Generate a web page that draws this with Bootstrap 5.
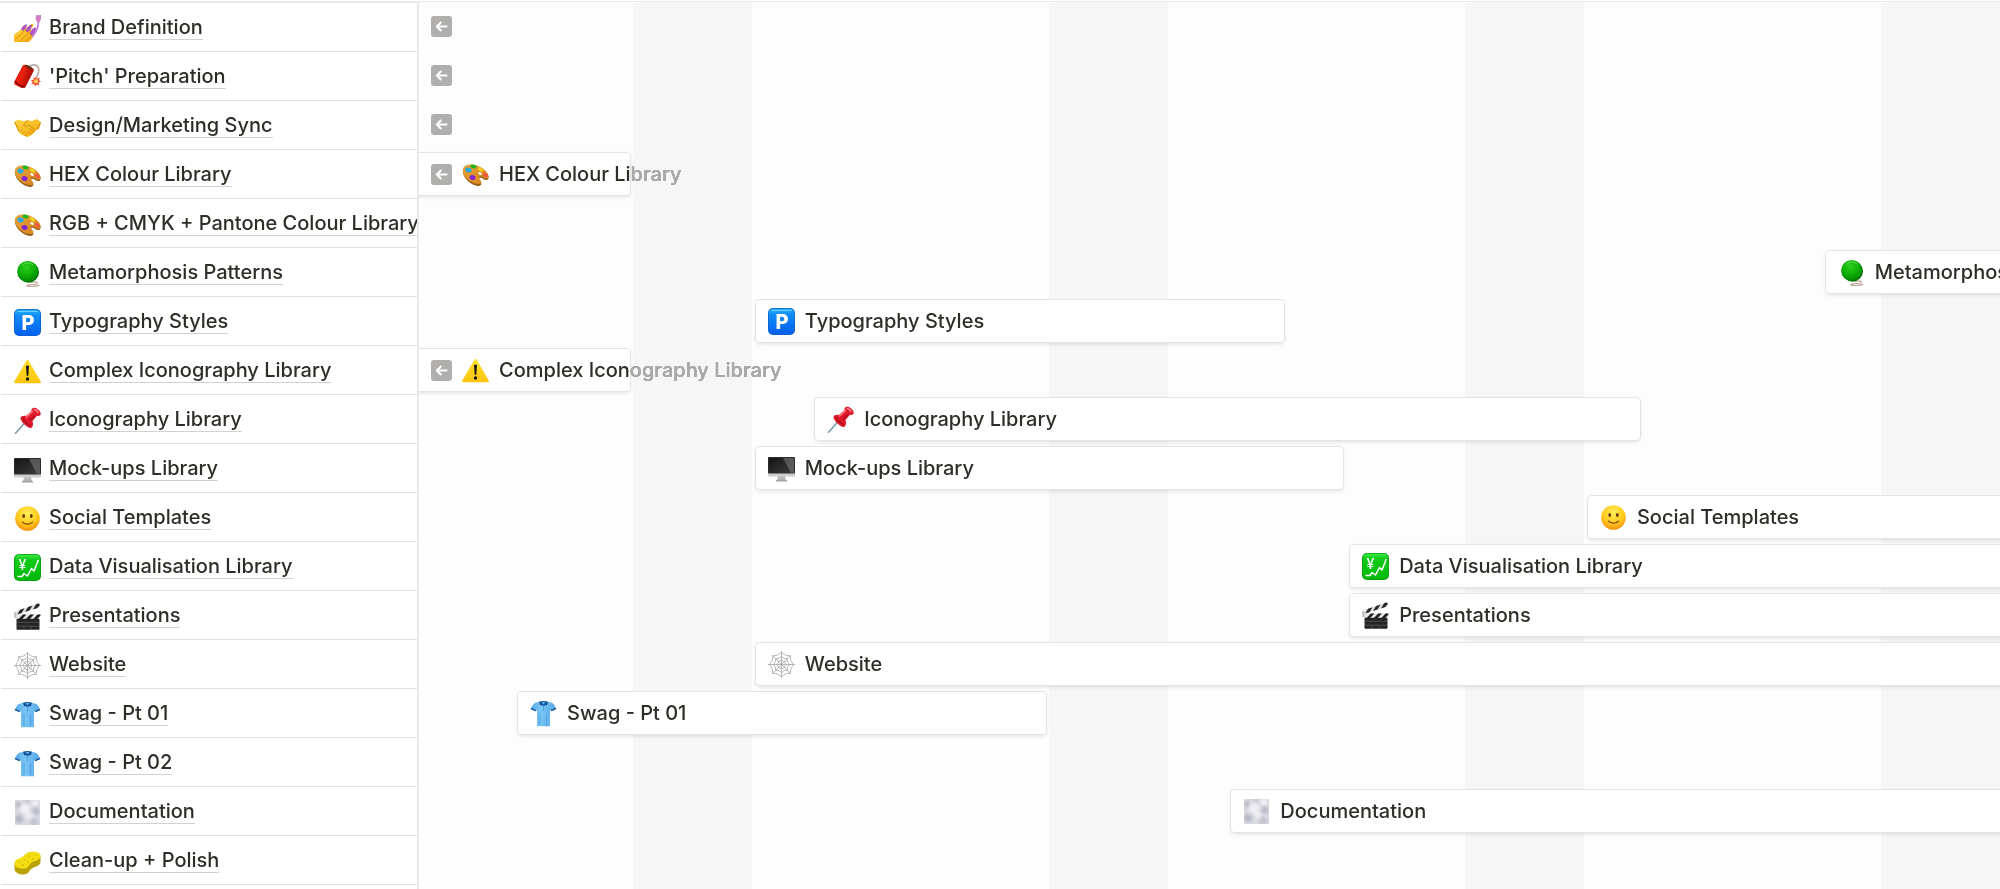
<!DOCTYPE html>
<html lang="en">
<head>
<meta charset="utf-8">
<meta name="viewport" content="width=device-width, initial-scale=1">
<title>Brand timeline</title>
<link href="https://cdn.jsdelivr.net/npm/bootstrap@5.3.0/dist/css/bootstrap.min.css" rel="stylesheet">
<style>
  :root { --row-h: 49px; --line: #e9e9e8; --ink: #2f2d27; --faded: #a9a9a7; }
  body { font-family: Inter, "Liberation Sans", sans-serif; font-size: 20px; line-height: 24px; font-weight: 500; font-optical-sizing: none; color: var(--ink); background: #fff; }
  .board { min-height: 100vh; padding-top: 1px; }
  .names { width: 419px; border-right: 2px solid var(--line); border-top: 2px solid var(--line); padding-left: 1px; }
  .name-row { height: var(--row-h); border-bottom: 1px solid #e2e2e1; padding: 2px 0 0 13px; gap: 8px; }
  .name-row a { color: inherit; text-decoration: none; white-space: nowrap; border-bottom: 1px solid #d2d2d0; line-height: 23px; }
  .emo { width: 27px; height: 27px; flex: none; overflow: visible; }
  .chart { display: grid; grid-template-columns: minmax(0, .6fr) repeat(26, minmax(0, 1fr)); grid-template-rows: repeat(18, var(--row-h)) 1fr; background: #fdfdfd; border-top: 1px solid var(--line); min-width: 0; }
  .weekend { grid-row: 1 / -1; grid-column: var(--from) / span 2; background: #f6f6f6; }
  .bar { position: relative; grid-row: var(--row); grid-column: var(--from) / var(--to); margin: 4px 3px 3px 4px; padding-left: 12px; gap: 10px; background: #fff; border-radius: 4px; box-shadow: 0 0 0 1px #e4e4e3, 0 2px 4px rgba(15, 15, 15, .12); white-space: nowrap; }
  .bar.to-edge { margin-right: -8px; }
  .bar.from-edge { margin-left: -8px; padding-left: 20px; }
  /* greys out the part of a label that runs past its bar */
  .bar.from-edge::after { content: ""; position: absolute; left: 100%; top: 4px; bottom: 4px; width: 200px; background: var(--faded); mix-blend-mode: lighten; }
  .back { width: 21px; height: 21px; flex: none; border: 0; padding: 0; border-radius: 3px; background: #b0afad; display: block; }
  .back svg { display: block; }
  .loose { grid-row: var(--row); grid-column: 1 / 3; margin-left: 12px; align-self: center; }
</style>
</head>
<body>
<svg width="0" height="0" class="position-absolute" aria-hidden="true">
  <defs>
    <linearGradient id="gSkin" x1="0" y1="0" x2="1" y2="1"><stop offset="0" stop-color="#ffd84a"/><stop offset="1" stop-color="#f3a806"/></linearGradient>
    <linearGradient id="gRed" x1="0" y1="0" x2="1" y2=".4"><stop offset="0" stop-color="#a80d06"/><stop offset=".45" stop-color="#f0210f"/><stop offset="1" stop-color="#a20a05"/></linearGradient>
    <linearGradient id="gBlue" x1="0" y1="0" x2="0" y2="1"><stop offset="0" stop-color="#25b3f8"/><stop offset=".22" stop-color="#118df6"/><stop offset="1" stop-color="#0560ee"/></linearGradient>
    <linearGradient id="gGreen" x1="0" y1="0" x2="0" y2="1"><stop offset="0" stop-color="#3bea47"/><stop offset=".2" stop-color="#0fcb17"/><stop offset="1" stop-color="#05b90b"/></linearGradient>
    <radialGradient id="gYo" cx=".45" cy=".3" r=".75"><stop offset="0" stop-color="#2bd01c"/><stop offset=".6" stop-color="#0aa905"/><stop offset="1" stop-color="#047a03"/></radialGradient>
    <radialGradient id="gFace" cx=".5" cy=".3" r=".72"><stop offset="0" stop-color="#fff05a"/><stop offset=".6" stop-color="#ffc91c"/><stop offset="1" stop-color="#f58d0d"/></radialGradient>
    <linearGradient id="gScreen" x1="0" y1="0" x2="1" y2="1"><stop offset="0" stop-color="#151515"/><stop offset="1" stop-color="#3c3c3c"/></linearGradient>
    <linearGradient id="gShirt" x1="0" y1="0" x2="1" y2="0"><stop offset="0" stop-color="#58a8e4"/><stop offset=".4" stop-color="#78c4f4"/><stop offset="1" stop-color="#57a9e6"/></linearGradient>
    <linearGradient id="gPal" x1="0" y1="0" x2="1" y2="1"><stop offset="0" stop-color="#e8a43a"/><stop offset="1" stop-color="#d1811c"/></linearGradient>
    <linearGradient id="gWarn" x1="0" y1="0" x2="0" y2="1"><stop offset="0" stop-color="#ffdf2e"/><stop offset="1" stop-color="#ffc40c"/></linearGradient>
    <filter id="fSoft" x="-30%" y="-30%" width="160%" height="160%"><feGaussianBlur stdDeviation="1.6"/></filter>
    <clipPath id="cSq"><rect x="1" y="1" width="25" height="25" rx="1"/></clipPath>

    <symbol id="i-nails" viewBox="0 0 27 27">
      <path d="M0 19.5 8.500 13.500 12 12l3 1.500 3 2 2.500 3-2 4.500L15 27H0z" fill="url(#gSkin)"/>
      <path d="M1 24.500 11.500 15M6 26.500 15 17M11 27l8.500-8" stroke="#d98a08" stroke-width=".9" fill="none"/>
      <path d="M14.500 13.500 19 9.500" stroke="#f7bd20" stroke-width="3"/>
      <g fill="#b651c9" stroke="#8b3aa0" stroke-width=".5"><path d="M7.500 14.500c.5-2.500 2.500-4.500 5-5 0 3-1.500 5-4 6z"/><path d="M12 16c.5-3 3-5.500 5.500-6 0 3.500-1.500 6-4.500 7z"/><path d="M16 19c.5-3 2.500-5.500 5.500-6.500 0 3.500-1.500 6.500-4.500 7.500z"/></g>
      <path d="M18.500 21.500c1.500-2.500 3.500-4 5-8.500l1-6" stroke="#c47ae0" stroke-width="1.700" fill="none" stroke-linecap="round"/>
      <path d="m22.500 0 1.200 1 1-1 1 1 1.300-1-.4 4.500-1.600 2.500h-1.200L22 4.200z" fill="#d97fc6" stroke="#a753a7" stroke-width=".5"/>
    </symbol>
    <symbol id="i-cracker" viewBox="0 0 27 27">
      <path d="M15 3c2-3 8-3 9.500 1 1.200 3.500-.5 6-2 10" fill="none" stroke="#b6aca2" stroke-width="1.600"/>
      <path d="M11.500 1 19 4.500c1 .6 1 2 .4 3L12 22c-1 2-3 2.300-5 1.700L1.500 21C0 20 0 18.500.6 17L8 3c.7-1.500 2-2.500 3.500-2z" fill="url(#gRed)"/>
      <path d="M1 17c1.500 3 7 6 10.500 6" fill="none" stroke="#7d0804" stroke-width="1.200"/>
      <ellipse cx="14.500" cy="3" rx="4.200" ry="1.500" transform="rotate(25 14.500 3)" fill="#6c2b18"/>
      <path d="m22 12 1 2.700 3-1.200-1.200 2.700L27 17.500l-2.500 1.200.8 2.800-2.600-1L21 22.500l-.8-2.500-3 .3 1.500-2.300-1.900-1.800 2.800-.5-.3-2.700 2 1.500z" fill="#f6512d"/><circle cx="21.900" cy="17.300" r="2" fill="#ffd35a"/>
    </symbol>
    <symbol id="i-shake" viewBox="0 0 27 27">
      <path d="M0 9 4 6.500l5 1.500 4.500-.7L18 8l5-2 4 3.500-2 6.500-3 1-1.500 2.500-2.500 2-2.500 1.800-3 .7-3-1.500-3-1.500L4 18z" fill="url(#gSkin)"/>
      <path d="m13.500 7.500-4 4.500c1 2 3.500 1.500 5-.5l7 6M17 21l-3-2.500M19.500 19l-4-3.500M6.500 18.500l2-2M9 20.500l2-2M11.500 22.500l1.500-2M1 9.500 5 18M26.500 10l-3.500 6" fill="none" stroke="#cf8709" stroke-width="1" stroke-linecap="round"/>
    </symbol>
    <symbol id="i-palette" viewBox="0 0 27 27">
      <path d="M1 9c1-4 6-5.500 11-4.700 6 1 13 5.700 14.500 11.200.5 2.500-1 4-3 3.500-2-.6-4-3-6-2-1.500 1 .5 2.800 1.500 4.500 1.200 2-.5 3.800-3.500 3.500C8 24-.5 15.500 1 9z" fill="#9c5c13"/>
      <path d="M1 8c1-4 6-5 11-4.200 6 1 13 5.700 14.500 10.700.5 2.500-1 3.500-3 3-2-.6-4-2.800-6-2-1.500 1 .5 2.800 1.500 4.500 1 2-.5 3.300-3.500 3C8 22.500-.5 14.500 1 8z" fill="url(#gPal)"/>
      <ellipse cx="11.500" cy="5.500" rx="3" ry="1.900" transform="rotate(15 11.500 5.500)" fill="#1fb41c"/>
      <ellipse cx="6.500" cy="9" rx="3.200" ry="2.300" transform="rotate(20 6.500 9)" fill="#25a8e0"/>
      <ellipse cx="10.500" cy="16.500" rx="3" ry="2.400" transform="rotate(20 10.500 16.500)" fill="#8224d8"/>
      <ellipse cx="18.500" cy="8.500" rx="2.800" ry="1.600" transform="rotate(35 18.500 8.500)" fill="#f6d51c"/>
      <ellipse cx="23.500" cy="14" rx="2.800" ry="1.700" transform="rotate(40 23.500 14)" fill="#f4504a"/>
      <ellipse cx="18" cy="12.500" rx="1.800" ry="1.200" transform="rotate(30 18 12.500)" fill="#fff"/>
    </symbol>
    <symbol id="i-yoyo" viewBox="0 0 27 27">
      <path d="M17 22.500c4-1.500 8 .3 5.500 1.500-3 1-9.500.5-9.500 1.800 0 1.200 8 1 12.500-.6" fill="none" stroke="#bda697" stroke-width="1.300"/>
      <circle cx="14.500" cy="12.200" r="10.500" fill="#046a04"/><circle cx="13.600" cy="11.500" r="10.500" fill="url(#gYo)"/>
      <path d="M8 5.500c3-3 8-3.500 11-.5" fill="none" stroke="#7eea70" stroke-width="1" opacity=".7"/>
    </symbol>
    <symbol id="i-park" viewBox="0 0 27 27">
      <rect width="27" height="27" rx="5" fill="#0a63c9"/><rect x=".8" y=".8" width="25.400" height="25.400" rx="4.400" fill="url(#gBlue)"/>
      <path d="M4 2.500h19" stroke="#7fd6ff" stroke-width="1" opacity=".8" stroke-linecap="round"/>
      <text x="14" y="20.500" text-anchor="middle" font-family="Inter, sans-serif" font-weight="800" font-size="20" fill="#fff">P</text>
    </symbol>
    <symbol id="i-warn" viewBox="0 0 27 27">
      <path d="M12.300 2.700q1.200-1.700 2.400 0L26.700 23.500q.6 1.700-1 1.700H1.300q-1.600 0-1-1.700z" fill="url(#gWarn)"/>
      <path d="M12 8q1.500-1.200 3 0l-.7 9.500q-.8.800-1.600 0z" fill="#141414"/><circle cx="13.500" cy="21" r="1.700" fill="#141414"/>
    </symbol>
    <symbol id="i-pin" viewBox="0 0 27 27">
      <path d="M1.500 26.300 12 14.500" stroke="#7c95a8" stroke-width="1.500" stroke-linecap="round"/>
      <path d="M6.500 11c0-1.500 3-2.500 5.500-2L17.500 4c-.6-2 1-3.700 3.300-3.300 2.500.5 5.700 3.500 6 5.800.2 2-2 3-3.800 2.300L18.500 14c1 3 .5 6.500-1.500 7C13 21 6.500 14.500 6.500 11z" fill="#e0192b"/>
      <path d="M8.500 10.500c2 4 5 7 8.500 8.500" stroke="#a50c1c" stroke-width="1.200" fill="none"/>
      <path d="m12.500 10 6-5.500M20 2.500c1.500 0 3 1.500 4 3" stroke="#ff7d83" stroke-width="1.400" fill="none" stroke-linecap="round"/>
      <path d="M15.500 13.500 21 8.500" stroke="#ae0d1f" stroke-width="1.400"/>
    </symbol>
    <symbol id="i-desk" viewBox="0 0 27 27">
      <path d="M10 21h7l.7 4H9.300z" fill="#b9b9bb"/><path d="M8.500 24.700h10l.8 1.800H7.700z" fill="#a2a2a6"/>
      <rect y="2" width="27" height="19.500" rx="1" fill="#cfcfd2"/><rect y="2" width="27" height="16.500" rx="1" fill="#2c2c2c"/>
      <rect x="1" y="3" width="25" height="14.800" fill="url(#gScreen)"/><path d="M15 3h11v14.800h-3z" fill="#707070" opacity=".65"/>
    </symbol>
    <symbol id="i-smile" viewBox="0 0 27 27">
      <circle cx="13.500" cy="13.500" r="12.300" fill="url(#gFace)"/>
      <ellipse cx="9.700" cy="11" rx="1.400" ry="2.100" fill="#6b3a0a"/><ellipse cx="17.300" cy="11" rx="1.400" ry="2.100" fill="#6b3a0a"/>
      <path d="M8.500 17.200q5 4 10 0" fill="none" stroke="#7c430b" stroke-width="1.200" stroke-linecap="round"/>
    </symbol>
    <symbol id="i-yen" viewBox="0 0 27 27">
      <rect width="27" height="27" rx="5" fill="#079b0e"/><rect x=".8" y=".8" width="25.400" height="25.400" rx="4.400" fill="url(#gGreen)"/>
      <text x="8.500" y="15.500" text-anchor="middle" font-family="Inter, sans-serif" font-weight="500" font-size="14" fill="#fff">¥</text>
      <path d="M4 22.500h4l2-3 3.500 2.500 4-7.500 2.500 2.500 3-7.500 1-3" fill="none" stroke="#fff" stroke-width="1.500" stroke-linejoin="round" stroke-linecap="round"/>
    </symbol>
    <symbol id="i-clap" viewBox="0 0 27 27">
      <path d="M.5 8.500 25 .3l.8 4L2 12z" fill="#e2e2e2"/>
      <path d="m6 6.700 4.500-1.500-3 5-4.200 1.200zM14 4l4.500-1.500-3 5-4.500 1.400zM22 1.300 25 .3l.8 2L23 5.200l-4 1.200z" fill="#2a2a2a"/>
      <path d="M0 8.500 4 12v4l-3.500-1z" fill="#bcbcbc"/>
      <path d="M2 11.500h24.500L26 16H2.500z" fill="#e4e4e4"/>
      <path d="m8 16 4.500-4.500H9L4.500 16zM15.500 16l4.500-4.500h-3.800L12 16zM23 16l3.500-3.500v-1h-3L19.500 16z" fill="#1d1d1d"/>
      <rect x="2.500" y="15.700" width="23" height="11" rx="1" fill="#242424"/>
      <path d="M3 19.300h22M3 23.200h22M10 23.500V26M17 23.500V26" stroke="#606060" stroke-width=".7"/>
    </symbol>
    <symbol id="i-web" viewBox="0 0 27 27">
      <g fill="none" stroke="#a5a5a7" stroke-width=".8">
        <path d="M13.500 0v27M0 13.500h27M4 4l19 19M23 4 4 23"/>
        <path d="M13.500 1.500Q17.500 5 22 5q0 4.500 3.500 8.500Q22 17.500 22 22q-4.500 0-8.500 3.500Q9.500 22 5 22q0-4.500-3.500-8.500Q5 9.500 5 5q4.500 0 8.500-3.500z"/>
        <path d="M13.500 5.500Q16 8 19.200 7.800 19 11 21.500 13.500 19 16 19.200 19.200 16 19 13.500 21.500 11 19 7.800 19.200 8 16 5.500 13.500 8 11 7.800 7.800 11 8 13.500 5.500z"/>
        <path d="M13.500 9Q15 10.500 16.700 10.300 16.500 12 18 13.500 16.500 15 16.700 16.700 15 16.500 13.500 18 12 16.500 10.300 16.700 10.500 15 9 13.500 10.500 12 10.300 10.300 12 10.500 13.500 9z"/>
      </g>
    </symbol>
    <symbol id="i-shirt" viewBox="0 0 27 27">
      <path d="M9 1.800 4.500 3C3 4.500 1.500 7 .7 9l4.800 2.300L7 10v16.300h13V10l1.500 1.300L26.300 9c-.8-2-2.300-4.500-3.800-6L18 1.800z" fill="url(#gShirt)"/>
      <path d="M.7 9l.6-1.300 4.900 2.300-.7 1.300zM26.300 9l-.6-1.300-4.900 2.300.7 1.300z" fill="#16599f"/>
      <path d="M9 1.800q4.500-1.800 9 0l-1 3.200-3.500.8L10 5z" fill="#12559b"/><path d="M11.500 2h4l-2 2.300z" fill="#6fb4e6"/><path d="M13.500 6v5M10 13v12M16.500 14v11" stroke="#4695d5" stroke-width=".7"/>
    </symbol>
    <symbol id="i-fog" viewBox="0 0 27 27">
      <g clip-path="url(#cSq)"><rect width="27" height="27" fill="#d9d9e1"/>
        <g filter="url(#fSoft)"><circle cx="4" cy="6" r="3" fill="#b9b9c8"/><circle cx="21" cy="4" r="3" fill="#f4f4f7"/><circle cx="11" cy="10" r="5" fill="#f1f1f5"/><circle cx="22" cy="12" r="3.500" fill="#babac9"/><circle cx="5" cy="20" r="4" fill="#b8b8c7"/><circle cx="15" cy="17" r="3.500" fill="#eeeef3"/><circle cx="20" cy="23" r="4" fill="#c3c3d0"/><circle cx="13" cy="2" r="2.500" fill="#c4c4d0"/></g></g>
    </symbol>
    <symbol id="i-sponge" viewBox="0 0 27 27">
      <path d="M.5 17c0-3.500 3-5 6.500-6.200 3-1 4-5.300 8.500-6.300 5-.8 11-.3 11 4.500v5c-.5 4-5 4.500-8 6-3 1.500-3 4.500-6 6-4 1.500-12-.5-12-5z" fill="#b9a106"/>
      <path d="M.5 16c-.3-3.500 2.700-5.300 6.500-6.300 3-1 4-4.700 8.500-5.700 5-.8 11-.3 11 4-.3 4-5 4.500-8 6-3 1.500-3 4.500-6 6-4 1.500-11.500 0-12-4z" fill="#f4de12"/>
      <g fill="#d3b908"><circle cx="5" cy="14" r=".8"/><circle cx="9" cy="17" r=".9"/><circle cx="11" cy="12" r=".8"/><circle cx="15" cy="8" r=".8"/><circle cx="19" cy="11" r=".9"/><circle cx="22" cy="7" r=".8"/><circle cx="14" cy="14" r=".7"/><circle cx="6" cy="18" r=".7"/><circle cx="18" cy="6" r=".6"/></g>
    </symbol>
    <symbol id="i-back" viewBox="0 0 21 21"><path d="M15.500 10.500H6M9.800 6.500l-4 4 4 4" fill="none" stroke="#fff" stroke-width="2" stroke-linecap="round" stroke-linejoin="round"/></symbol>
  </defs>
</svg>

<main class="board d-flex overflow-hidden">
  <nav class="names flex-shrink-0 overflow-hidden" aria-label="Tasks">
    <div class="name-row d-flex align-items-center"><svg class="emo"><use href="#i-nails"/></svg><a href="#">Brand Definition</a></div>
    <div class="name-row d-flex align-items-center"><svg class="emo"><use href="#i-cracker"/></svg><a href="#">'Pitch' Preparation</a></div>
    <div class="name-row d-flex align-items-center"><svg class="emo"><use href="#i-shake"/></svg><a href="#">Design/Marketing Sync</a></div>
    <div class="name-row d-flex align-items-center"><svg class="emo"><use href="#i-palette"/></svg><a href="#">HEX Colour Library</a></div>
    <div class="name-row d-flex align-items-center"><svg class="emo"><use href="#i-palette"/></svg><a href="#">RGB + CMYK + Pantone Colour Library</a></div>
    <div class="name-row d-flex align-items-center"><svg class="emo"><use href="#i-yoyo"/></svg><a href="#">Metamorphosis Patterns</a></div>
    <div class="name-row d-flex align-items-center"><svg class="emo"><use href="#i-park"/></svg><a href="#">Typography Styles</a></div>
    <div class="name-row d-flex align-items-center"><svg class="emo"><use href="#i-warn"/></svg><a href="#">Complex Iconography Library</a></div>
    <div class="name-row d-flex align-items-center"><svg class="emo"><use href="#i-pin"/></svg><a href="#">Iconography Library</a></div>
    <div class="name-row d-flex align-items-center"><svg class="emo"><use href="#i-desk"/></svg><a href="#">Mock-ups Library</a></div>
    <div class="name-row d-flex align-items-center"><svg class="emo"><use href="#i-smile"/></svg><a href="#">Social Templates</a></div>
    <div class="name-row d-flex align-items-center"><svg class="emo"><use href="#i-yen"/></svg><a href="#">Data Visualisation Library</a></div>
    <div class="name-row d-flex align-items-center"><svg class="emo"><use href="#i-clap"/></svg><a href="#">Presentations</a></div>
    <div class="name-row d-flex align-items-center"><svg class="emo"><use href="#i-web"/></svg><a href="#">Website</a></div>
    <div class="name-row d-flex align-items-center"><svg class="emo"><use href="#i-shirt"/></svg><a href="#">Swag - Pt 01</a></div>
    <div class="name-row d-flex align-items-center"><svg class="emo"><use href="#i-shirt"/></svg><a href="#">Swag - Pt 02</a></div>
    <div class="name-row d-flex align-items-center"><svg class="emo"><use href="#i-fog"/></svg><a href="#">Documentation</a></div>
    <div class="name-row d-flex align-items-center"><svg class="emo"><use href="#i-sponge"/></svg><a href="#">Clean-up + Polish</a></div>
  </nav>

  <section class="chart flex-grow-1 overflow-hidden" aria-label="Timeline">
    <div class="weekend" style="--from:5"></div>
    <div class="weekend" style="--from:12"></div>
    <div class="weekend" style="--from:19"></div>
    <div class="weekend" style="--from:26"></div>

    <button type="button" class="back loose" style="--row:1" aria-label="Scroll to Brand Definition"><svg width="21" height="21"><use href="#i-back"/></svg></button>
    <button type="button" class="back loose" style="--row:2" aria-label="Scroll to 'Pitch' Preparation"><svg width="21" height="21"><use href="#i-back"/></svg></button>
    <button type="button" class="back loose" style="--row:3" aria-label="Scroll to Design/Marketing Sync"><svg width="21" height="21"><use href="#i-back"/></svg></button>

    <div class="bar from-edge d-flex align-items-center" style="--row:4;--from:1;--to:5"><button type="button" class="back" aria-label="Scroll to start"><svg width="21" height="21"><use href="#i-back"/></svg></button><svg class="emo"><use href="#i-palette"/></svg><span>HEX Colour Library</span></div>
    <div class="bar to-edge d-flex align-items-center" style="--row:6;--from:25;--to:-1"><svg class="emo"><use href="#i-yoyo"/></svg><span>Metamorphosis Patterns</span></div>
    <div class="bar d-flex align-items-center" style="--row:7;--from:7;--to:16"><svg class="emo"><use href="#i-park"/></svg><span>Typography Styles</span></div>
    <div class="bar from-edge d-flex align-items-center" style="--row:8;--from:1;--to:5"><button type="button" class="back" aria-label="Scroll to start"><svg width="21" height="21"><use href="#i-back"/></svg></button><svg class="emo"><use href="#i-warn"/></svg><span>Complex Iconography Library</span></div>
    <div class="bar d-flex align-items-center" style="--row:9;--from:8;--to:22"><svg class="emo"><use href="#i-pin"/></svg><span>Iconography Library</span></div>
    <div class="bar d-flex align-items-center" style="--row:10;--from:7;--to:17"><svg class="emo"><use href="#i-desk"/></svg><span>Mock-ups Library</span></div>
    <div class="bar to-edge d-flex align-items-center" style="--row:11;--from:21;--to:-1"><svg class="emo"><use href="#i-smile"/></svg><span>Social Templates</span></div>
    <div class="bar to-edge d-flex align-items-center" style="--row:12;--from:17;--to:-1"><svg class="emo"><use href="#i-yen"/></svg><span>Data Visualisation Library</span></div>
    <div class="bar to-edge d-flex align-items-center" style="--row:13;--from:17;--to:-1"><svg class="emo"><use href="#i-clap"/></svg><span>Presentations</span></div>
    <div class="bar to-edge d-flex align-items-center" style="--row:14;--from:7;--to:-1"><svg class="emo"><use href="#i-web"/></svg><span>Website</span></div>
    <div class="bar d-flex align-items-center" style="--row:15;--from:3;--to:12"><svg class="emo"><use href="#i-shirt"/></svg><span>Swag - Pt 01</span></div>
    <div class="bar to-edge d-flex align-items-center" style="--row:17;--from:15;--to:-1"><svg class="emo"><use href="#i-fog"/></svg><span>Documentation</span></div>
  </section>
</main>
<script src="https://cdn.jsdelivr.net/npm/bootstrap@5.3.0/dist/js/bootstrap.bundle.min.js"></script>
</body>
</html>
